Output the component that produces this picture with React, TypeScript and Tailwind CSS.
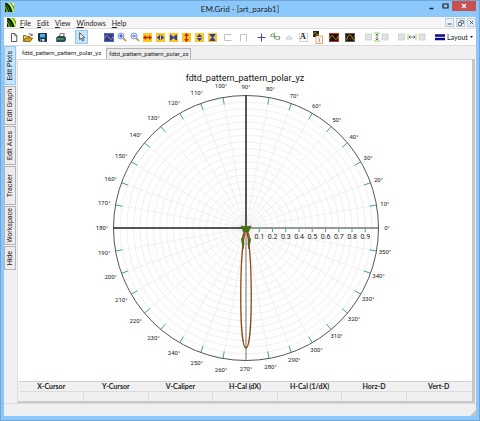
import React from "react";

const menus = ["File", "Edit", "View", "Windows", "Help"];

const sideTabs = [
  { label: "Edit Plots", active: true },
  { label: "Edit Graph" },
  { label: "Edit Axes" },
  { label: "Tracker" },
  { label: "Workspace" },
  { label: "Hide", short: true },
];

const readouts = [
  "X-Cursor",
  "Y-Cursor",
  "V-Caliper",
  "H-Cal (dX)",
  "H-Cal (1/dX)",
  "Horz-D",
  "Vert-D",
];

const Logo = () => (
  <svg width="9" height="9" viewBox="0 0 18 18" aria-hidden="true">
    <rect width="18" height="18" fill="#a8d832" />
    <path d="M0 0h4c5 3 9 8 11 18H0z" fill="#0d2408" />
    <path d="M0 7c3 2 5 6 6 11H3C3 14 2 11 0 10z" fill="#8fd022" />
    <path d="M0 2c5 3 9 9 10 16H8C7 11 4 7 0 5z" fill="#2f8a1c" />
    <path d="M5 0h6c4 5 6 10 7 17h-2C14 9 10 4 5 0z" fill="#e4f250" />
    <path d="M10 0h8v13C16 8 14 4 10 0z" fill="#3f9a24" />
    <path d="M13 0h5v7z" fill="#f7fbb0" />
  </svg>
);

const NewIcon = () => (
  <svg width="8" height="9" viewBox="0 0 8 9">
    <path d="M1.5.5h3.3l2 2v6H1.5z" fill="#fff" stroke="#333" strokeWidth=".8" />
    <path d="M4.7.5v2.2h2.2" fill="none" stroke="#333" strokeWidth=".7" />
  </svg>
);

const OpenIcon = () => (
  <svg width="10" height="9" viewBox="0 0 10 9">
    <path d="M.5 8V2.5h2.7l.8 1h3V5" fill="#f5d55a" stroke="#6b5208" strokeWidth=".8" />
    <path d="M.5 8.4 2.4 5h7.2L7.4 8.4z" fill="#e5a91c" stroke="#5a4204" strokeWidth=".7" />
    <path d="M5.5 1.6C6.5.3 8 .5 8.7 2M9.2.8v1.7H7.6" fill="none" stroke="#222" strokeWidth=".7" />
  </svg>
);

const SaveIcon = () => (
  <svg width="9" height="9" viewBox="0 0 9 9">
    <path d="M.5.5h8v8h-7l-1-1z" fill="#123a5a" stroke="#0a1520" strokeWidth=".8" />
    <rect x="2" y="1" width="5" height="3.4" fill="#4db2dc" />
    <rect x="2.4" y="6" width="4" height="2.5" fill="#e8eef2" />
    <rect x="3" y="6.4" width="1.2" height="2" fill="#111" />
  </svg>
);

const PrintIcon = () => (
  <svg width="10" height="9" viewBox="0 0 10 9">
    <path d="M3.2 4 4.3.6h4L7.4 4z" fill="#fff" stroke="#333" strokeWidth=".7" />
    <path d="M.7 4.5 2 3.6h6.6l.8 1v3l-1 .9H.7z" fill="#1d5560" stroke="#10292e" strokeWidth=".7" />
    <path d="M1.2 6h6.6" stroke="#9ecf7d" strokeWidth=".8" />
  </svg>
);

const CursorIcon = () => (
  <svg width="8" height="10" viewBox="0 0 8 10">
    <path d="M1.7.7v7l1.6-1.5L4.5 9l1.2-.6-1.2-2.6h2.1z" fill="#fff" stroke="#333" strokeWidth=".8" />
  </svg>
);

const FitIcon = () => (
  <svg width="10" height="9" viewBox="0 0 10 9">
    <rect width="10" height="9" fill="#5a64cc" />
    <rect x="1" y="1" width="8" height="7" fill="#30398c" />
    <path d="M1.2 5C2.5 1 3.8 2 5 4.5S7.6 7.5 8.8 3.5" fill="none" stroke="#b3a85c" strokeWidth=".9" />
  </svg>
);

const ZoomIcon = ({ plus }: { plus?: boolean }) => (
  <svg width="10" height="10" viewBox="0 0 10 10">
    <path d="m6 6 3 3" stroke="#c98c1a" strokeWidth="1.7" />
    <circle cx="4" cy="4" r="3" fill="#dfe9ff" stroke="#7488dc" strokeWidth=".9" />
    <path d={plus ? "M2.3 4h3.4M4 2.3v3.4" : "M2.4 4h3.2"} stroke="#2035c0" strokeWidth="1" />
  </svg>
);

const scalePaths = {
  out: "M0 4.5 2.8 2v1.8h3.4V2L9 4.5 6.2 7V5.2H2.8V7z",
  both: "M.8 4.5 4 1.8v5.4zM8.2 4.5 5 1.8v5.4z",
  in: "M1 1.7h1L4.4 4 7 1.7h1v5.6H7L4.5 5 2 7.3H1z",
};

const ScaleIcon = ({
  kind,
  color,
  vertical,
}: {
  kind: keyof typeof scalePaths;
  color: string;
  vertical?: boolean;
}) => (
  <svg width="9" height="9" viewBox="0 0 9 9">
    <rect width="9" height="9" fill="#ffc81e" />
    <path d={scalePaths[kind]} fill={color} transform={vertical ? "rotate(90 4.5 4.5)" : undefined} />
  </svg>
);

const BracketIcon = ({ down }: { down?: boolean }) => (
  <svg width="9" height="9" viewBox="0 0 9 9">
    <path d={down ? "M1.5 8.5v-7h6v7" : "M8.5 1.5h-7v6h7"} fill="none" stroke="#c4c4c4" />
  </svg>
);

const PlusIcon = () => (
  <svg width="9" height="9" viewBox="0 0 9 9">
    <path d="M4.5.5v8M.5 4.5h8" stroke="#4444cc" strokeWidth="1" />
  </svg>
);

const TraceIcon = () => (
  <svg width="11" height="10" viewBox="0 0 11 10">
    <path d="M0 4.5h7M4.5 0v7" stroke="#7cae7c" strokeWidth=".8" />
    <path d="M.8 4C2 .5 3.500 1.5 4.6 4.5S7.5 9.5 10 5.5" fill="none" stroke="#2f9a3b" strokeWidth=".9" />
    <path d="M5.5 4.5h4v3" fill="none" stroke="#8a6a50" strokeWidth=".7" />
  </svg>
);

const PeakIcon = () => (
  <svg width="8" height="6" viewBox="0 0 8 6">
    <path d="M.8 5 4 1.5 7.2 5z" fill="#eee" stroke="#bbb" strokeWidth=".8" />
  </svg>
);

const TextIcon = () => (
  <span className="flex size-[9px] items-center justify-center border border-gray-300 bg-white font-['Liberation_Serif',serif] text-[8px] leading-none font-bold">
    A
  </span>
);

const CopyIcon = () => (
  <svg width="11" height="13" viewBox="0 0 11 13">
    <rect width="6" height="6" fill="#222" />
    <path d="M0 4C1.5 0 2.5 1 3.5 3s1.5 1 2.5 0" fill="none" stroke="#d0b428" strokeWidth=".8" />
    <rect x="3" y="5" width="6.5" height="7.5" fill="#fff3e8" stroke="#ee9b62" strokeWidth=".9" />
    <path d="M6.3 7v4" stroke="#7d8cf0" strokeWidth=".9" />
  </svg>
);

const ScopeIcon = ({ border, second }: { border: string; second?: boolean }) => (
  <svg width="10" height="9" viewBox="0 0 10 9">
    <rect x=".5" y=".5" width="9" height="8" fill="#1a1208" stroke={border} strokeWidth=".9" />
    <path
      d={second ? "M1 7.5C2.5 6 3 1.5 5 2s2.5 4 4 5.5" : "M1 5.5C2 2 3.5 1.5 5 4.5S8 7 9 3"}
      fill="none"
      stroke="#cf9a1c"
      strokeWidth=".9"
    />
    {second && <path d="M1 3.5C3 7 6 7 9 2.5" fill="none" stroke="#77663a" strokeWidth=".6" />}
  </svg>
);

const SpacingIcon = ({ vertical }: { vertical?: boolean }) => (
  <svg width={vertical ? 24 : 28} height="10" viewBox={vertical ? "0 0 24 10" : "0 0 28 10"}>
    <rect x=".5" y="2" width="6" height="6" fill="#e2e2e2" stroke="#ccc" strokeWidth=".8" />
    <rect x={vertical ? 17 : 21} y="2" width="6" height="6" fill="#e2e2e2" stroke="#ccc" strokeWidth=".8" />
    {vertical ? (
      <>
        <path d="M9 1h6M9 9h6" stroke="#86d865" strokeWidth="1" />
        <path d="M12 2v6M10.5 3.5 12 2l1.5 1.5M10.5 6.5 12 8l1.5-1.5" fill="none" stroke="#555" strokeWidth=".8" />
      </>
    ) : (
      <>
        <path d="M10 2v6M18 2v6" stroke="#86d865" strokeWidth="1" />
        <path d="M11 5h6M12.5 3.5 11 5l1.5 1.5M15.5 3.5 17 5l-1.5 1.5" fill="none" stroke="#555" strokeWidth=".8" />
      </>
    )}
  </svg>
);

type Tool = { name: string; icon: React.ReactNode; active?: boolean };

const ToolGroup = ({ tools, width, gap }: { tools: Tool[]; width: string; gap: string }) => (
  <div className={`flex shrink-0 ${gap}`}>
    {tools.map((tool) => (
      <button
        key={tool.name}
        type="button"
        aria-label={tool.name}
        className={`flex h-[14px] items-center justify-center ${width} ${
          tool.active ? "border border-[#90c8f6] bg-[#c8e4fc]" : ""
        }`}
      >
        {tool.icon}
      </button>
    ))}
  </div>
);

const fileTools: Tool[] = [
  { name: "New", icon: <NewIcon /> },
  { name: "Open", icon: <OpenIcon /> },
  { name: "Save", icon: <SaveIcon /> },
];

const zoomTools: Tool[] = [
  { name: "Fit", icon: <FitIcon /> },
  { name: "Zoom in", icon: <ZoomIcon plus /> },
  { name: "Zoom out", icon: <ZoomIcon /> },
  { name: "Expand X", icon: <ScaleIcon kind="out" color="#c4200f" /> },
  { name: "Fit X", icon: <ScaleIcon kind="both" color="#2a3cc0" /> },
  { name: "Shrink X", icon: <ScaleIcon kind="in" color="#2a3cc0" /> },
  { name: "Expand Y", icon: <ScaleIcon kind="out" color="#c4200f" vertical /> },
  { name: "Fit Y", icon: <ScaleIcon kind="both" color="#2a3cc0" vertical /> },
  { name: "Shrink Y", icon: <ScaleIcon kind="in" color="#2a3cc0" vertical /> },
];

const caliperTools: Tool[] = [
  { name: "Horizontal caliper", icon: <BracketIcon /> },
  { name: "Vertical caliper", icon: <BracketIcon down /> },
];

const markerTools: Tool[] = [
  { name: "Crosshair", icon: <PlusIcon /> },
  { name: "Trace", icon: <TraceIcon /> },
  { name: "Peak", icon: <PeakIcon /> },
  { name: "Text", icon: <TextIcon /> },
];

const graphTools: Tool[] = [
  { name: "Copy graph", icon: <CopyIcon /> },
  { name: "Edit graph", icon: <ScopeIcon border="#c02a2a" /> },
  { name: "Add graph", icon: <ScopeIcon border="#555" second /> },
];

const CX = 228;
const CY = 168;
const R = 132.5;

const point = (deg: number, r: number) => {
  const a = (deg * Math.PI) / 180;
  return { x: CX + r * Math.cos(a), y: CY - r * Math.sin(a) };
};

const angles = Array.from({ length: 36 }, (_, i) => i * 10);
const rings = Array.from({ length: 19 }, (_, i) => ((i + 1) * R) / 20);
const ticks = [1, 2, 3, 4, 5, 6, 7, 8, 9];

const PolarPlot = () => (
  <svg
    width="454"
    height="320"
    viewBox="0 0 454 320"
    className="font-['Roboto',Arial,sans-serif]"
    role="img"
    aria-label="Polar plot"
  >
    <text x={CX - 1} y="21" textAnchor="middle" fontSize="9" fill="#111">
      fdtd_pattern_pattern_polar_yz
    </text>

    {/* Grid */}
    <g fill="none" stroke="#e9e9e9" strokeWidth=".7">
      {rings.map((r) => (
        <circle key={r} cx={CX} cy={CY} r={r} />
      ))}
      {angles.map((deg) => {
        const p = point(deg, R);
        return <line key={deg} x1={CX} y1={CY} x2={p.x} y2={p.y} />;
      })}
    </g>

    {/* Angle ticks and labels */}
    {angles.map((deg) => {
      const a = point(deg, R);
      const b = point(deg, R - 7);
      const t = point(deg, deg > 90 && deg < 270 ? 144 : 141);
      return (
        <g key={deg}>
          {deg % 90 !== 0 && <line x1={a.x} y1={a.y} x2={b.x} y2={b.y} stroke="#4aa3a3" />}
          <text x={t.x} y={t.y + 2} textAnchor="middle" fontSize="6" fill="#222">
            {deg}°
          </text>
        </g>
      );
    })}

    {/* Axes */}
    <circle cx={CX} cy={CY} r={R} fill="none" stroke="#555" />
    <path d={`M${CX} ${CY}V${CY + R}`} stroke="#777" />
    <path d={`M${CX} ${CY}H${CX + R}`} stroke="#777" strokeWidth="1.5" />
    <path d={`M${CX - R} ${CY}H${CX}V${CY - R}`} fill="none" stroke="#222" strokeWidth="1.5" />
    {ticks.map((n) => {
      const x = CX + (n * R) / 10;
      return (
        <g key={n}>
          <line x1={x} y1={CY + 1} x2={x} y2={CY + 4} stroke="#4aa3a3" />
          <text x={x} y={CY + 11} textAnchor="middle" fontSize="7" fill="#222">
            0.{n}
          </text>
        </g>
      );
    })}

    {/* Pattern */}
    <g fill="none" strokeLinejoin="round">
      <path
        d={`M${CX} ${CY}C${CX - 7} ${CY + 24} ${CX - 7} ${CY + 120} ${CX} ${CY + 120}S${CX + 7} ${CY + 24} ${CX} ${CY}z`}
        stroke="#8a4b12"
        strokeWidth="1.3"
      />
      <path
        d={`M${CX} ${CY}l-3 7-1 5 .5 4 .5 5 1-5-1-8zM${CX} ${CY}l3 7 1 5-.5 4-.5 5-1-5 1-8z`}
        stroke="#8a4b12"
        strokeWidth=".9"
      />
      <path d={`M${CX - 4} ${CY + 10}l1 8M${CX + 4} ${CY + 10}l-1 8`} stroke="#47701a" strokeWidth="1.8" />
      <path
        d={`M${CX - 5} ${CY - 2}l3 .5 2 .5 2-.5 3-.5-1.5 3-1 3-2.500-1-2.500 1-1-3z`}
        fill="#2f7a10"
        stroke="#5a5a14"
        strokeWidth=".8"
      />
    </g>
  </svg>
);

const App = () => {
  return (
    <div className="flex min-h-screen w-full flex-col border border-[#6fa6d6] bg-[#8cc8fb] px-[3px] pb-1 font-['Lato','Open_Sans',sans-serif] text-[7px] text-[#222]">
      {/* Title bar */}
      <header className="flex h-4 items-start">
        <div className="w-[52px] pt-[2px] pl-px">
          <Logo />
        </div>
        <h1 className="flex-1 pt-px text-center text-[8px] leading-[14px]">EM.Grid - [art_parab1]</h1>
        <div className="flex h-[10px]">
          <button type="button" aria-label="Minimize" className="flex w-[14px] items-center justify-center">
            <svg width="5" height="8" viewBox="0 0 5 8">
              <path d="M.5 6.5h4" stroke="#222" strokeWidth="1.5" />
            </svg>
          </button>
          <button type="button" aria-label="Maximize" className="flex w-[14px] items-center justify-center">
            <svg width="7" height="6" viewBox="0 0 7 6">
              <path d="M1 1h5v4H1z" fill="none" stroke="#222" strokeWidth="1.2" />
            </svg>
          </button>
          <button type="button" aria-label="Close" className="flex w-6 items-center justify-center bg-[#c8504f]">
            <svg width="6" height="6" viewBox="0 0 6 6">
              <path d="m1 1 4 4M5 1 1 5" stroke="#fff" strokeWidth="1.2" />
            </svg>
          </button>
        </div>
      </header>

      <div className="flex flex-1 flex-col bg-[#f0f0f0]">
        {/* Menu */}
        <nav className="flex h-[11px] items-center bg-[#f6f6f6] pl-[3px]">
          <Logo />
          <div className="flex flex-1 gap-[6px] pl-1">
            {menus.map((menu) => (
              <button key={menu} type="button" className="leading-[10px]">
                <span className="underline">{menu[0]}</span>
                {menu.slice(1)}
              </button>
            ))}
          </div>
          <div className="flex gap-[2px]">
            <button type="button" aria-label="Minimize graph" className="flex h-[9px] w-[9px] items-center justify-center border border-[#b8cde0] bg-[#e9f1f9]">
              <svg width="5" height="5" viewBox="0 0 5 5">
                <path d="M.5 4h4" stroke="#46586c" />
              </svg>
            </button>
            <button type="button" aria-label="Restore graph" className="flex h-[9px] w-[9px] items-center justify-center border border-[#b8cde0] bg-[#e9f1f9]">
              <svg width="6" height="6" viewBox="0 0 6 6">
                <path d="M.5 2.5h3v3h-3zM2 2V.6h3.4v3H4" fill="none" stroke="#46586c" strokeWidth=".8" />
              </svg>
            </button>
            <button type="button" aria-label="Close graph" className="flex h-[9px] w-[9px] items-center justify-center border border-[#b8cde0] bg-[#e9f1f9]">
              <svg width="5" height="5" viewBox="0 0 5 5">
                <path d="m.7.7 3.6 3.6M4.3.7.7 4.3" stroke="#46586c" />
              </svg>
            </button>
          </div>
        </nav>

        {/* Toolbar */}
        <div className="flex h-[18px] items-center border-t border-b border-[#dcdcdc] bg-white pl-[3px]">
          <ToolGroup tools={fileTools} width="w-[14px]" gap="ml-0" />
          <ToolGroup tools={[{ name: "Print", icon: <PrintIcon /> }]} width="w-[14px]" gap="ml-[5px]" />
          <ToolGroup tools={[{ name: "Select", icon: <CursorIcon />, active: true }]} width="w-[13px]" gap="ml-[7px]" />
          <ToolGroup tools={zoomTools} width="w-[13px]" gap="ml-[14px]" />
          <ToolGroup tools={caliperTools} width="w-[16px]" gap="ml-0" />
          <ToolGroup tools={markerTools} width="w-[14px]" gap="ml-[3px]" />
          <ToolGroup tools={graphTools} width="w-[16px]" gap="ml-0" />
          <ToolGroup tools={[{ name: "Vertical spacing", icon: <SpacingIcon vertical /> }]} width="w-6" gap="ml-[7px]" />
          <ToolGroup tools={[{ name: "Horizontal spacing", icon: <SpacingIcon /> }]} width="w-7" gap="ml-[9px]" />
          <button type="button" className="ml-[9px] flex shrink-0 items-center gap-[2px] leading-[10px]">
            <svg width="10" height="7" viewBox="0 0 10 7">
              <path d="M0 1.5h10M0 5h10" stroke="#0a0a90" strokeWidth="2.6" />
            </svg>
            Layout
            <svg width="3" height="2" viewBox="0 0 3 2">
              <path d="M0 0h3L1.5 2z" fill="#222" />
            </svg>
          </button>
        </div>

        {/* Workspace */}
        <div className="flex flex-1">
          <aside className="flex w-3 flex-col gap-px">
            {sideTabs.map((tab) => (
              <button
                key={tab.label}
                type="button"
                className={`flex w-3 items-center justify-center border font-['Roboto',Arial,sans-serif] ${
                  tab.short ? "h-6" : "h-[39px]"
                } ${tab.active ? "border-[#90c8f6] bg-[#c8e4fc]" : "border-[#b4b4b4] bg-[#ececec]"}`}
              >
                <span className="rotate-180 leading-[10px] whitespace-nowrap [writing-mode:vertical-rl]">{tab.label}</span>
              </button>
            ))}
          </aside>

          <main className="ml-px flex min-w-0 flex-1 flex-col pr-px">
            <div role="tablist" className="flex h-[13px] items-end font-['Roboto',Arial,sans-serif] text-[6px]">
              <button type="button" role="tab" aria-selected="true" className="h-[13px] bg-white px-[5px] leading-[12px]">
                fdtd_pattern_pattern_polar_yz
              </button>
              <button
                type="button"
                role="tab"
                aria-selected="false"
                className="h-[11px] border border-b-0 border-[#b4b4b4] bg-[#ececec] px-[2px] leading-[10px]"
              >
                fdtd_pattern_pattern_polar_zx
              </button>
            </div>

            <div className="flex flex-1 flex-col border-r-[3px] border-b-2 border-l border-[#c8c8c8] border-l-[#e0e0e0] bg-white">
              <div className="flex flex-1 justify-center border-t border-[#d8d8d8]">
                <PolarPlot />
              </div>
              <div className="bg-[#f0f0f0] px-px">
                <table className="w-full table-fixed border-t border-[#d0d0d0]">
                  <thead>
                    <tr>
                      {readouts.map((name) => (
                        <th key={name} className="h-[10px] p-0 text-center leading-[9px] font-bold">
                          {name}
                        </th>
                      ))}
                    </tr>
                  </thead>
                  <tbody>
                    <tr>
                      {readouts.map((name) => (
                        <td key={name} className="h-[10px] border-t border-r border-[#dcdcdc] p-0 last:border-r-0" />
                      ))}
                    </tr>
                  </tbody>
                </table>
              </div>
            </div>
          </main>
        </div>

        {/* Status bar */}
        <footer className="flex h-[13px] items-end justify-end border-t border-[#dcdcdc]">
          <svg width="6" height="6" viewBox="0 0 6 6" aria-hidden="true">
            <path d="M6 0v6H0z" fill="#c4c4c4" />
          </svg>
        </footer>
      </div>
    </div>
  );
};

export default App;
